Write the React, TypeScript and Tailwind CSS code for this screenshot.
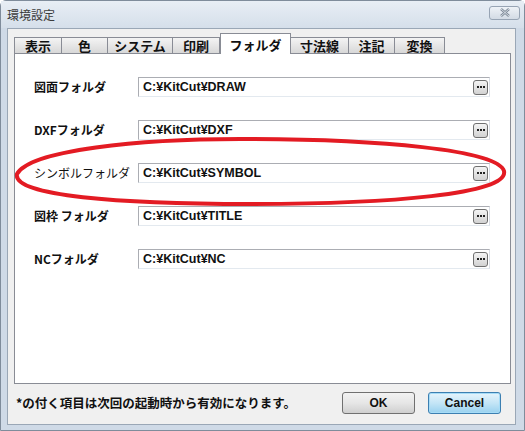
import React from 'react'

const jp = { fontFamily: '"Noto Sans CJK JP", "Liberation Sans", sans-serif' }
const latin = { fontFamily: '"Liberation Sans", "Noto Sans CJK JP", sans-serif' }

const tabs = [
  { label: '表示', w: 'w-[48px]' },
  { label: '色', w: 'w-[46px]' },
  { label: 'システム', w: 'w-[65px]' },
  { label: '印刷', w: 'w-[47px]' },
  { label: 'フォルダ', w: 'w-[71px]', active: true },
  { label: '寸法線', w: 'w-[58px]' },
  { label: '注記', w: 'w-[46px]' },
  { label: '変換', w: 'w-[50px]' },
]

const folders = [
  { label: '図面フォルダ', path: 'C:¥KitCut¥DRAW', bold: true },
  { label: 'DXFフォルダ', path: 'C:¥KitCut¥DXF', bold: true },
  { label: 'シンボルフォルダ', path: 'C:¥KitCut¥SYMBOL', bold: false },
  { label: '図枠 フォルダ', path: 'C:¥KitCut¥TITLE', bold: true },
  { label: 'NCフォルダ', path: 'C:¥KitCut¥NC', bold: true },
]

function BrowseButton() {
  return (
    <button className="mr-[1px] flex h-[15px] w-[15px] items-center justify-center rounded-[3px] border border-[#707070] bg-gradient-to-b from-[#f4f4f4] to-[#d2d2d2]">
      <span className="flex gap-[1px]">
        <span className="h-[2px] w-[2px] bg-[#222]" />
        <span className="h-[2px] w-[2px] bg-[#222]" />
        <span className="h-[2px] w-[2px] bg-[#222]" />
      </span>
    </button>
  )
}

function FolderRow({ label, path, bold }: { label: string; path: string; bold: boolean }) {
  return (
    <div className="flex items-center">
      <span
        style={jp}
        className={`w-[104px] text-[12px] text-[#111] ${bold ? 'font-bold' : 'font-normal'}`}
      >
        {label}
      </span>
      <div className="flex h-[20px] w-[352px] items-center justify-between border border-[#abadb3] border-r-[#dbdfe6] border-b-[#e3e9ef] bg-white">
        <span style={latin} className="pl-[4px] text-[12.5px] font-bold text-[#111]">
          {path}
        </span>
        <BrowseButton />
      </div>
    </div>
  )
}

export default function App() {
  return (
    <div className="relative h-[431px] w-[525px] overflow-hidden bg-white">
      <div className="flex h-[431px] w-[525px] flex-col rounded-t-[6px] border border-[#7f8c9b] bg-[#cfdae7]">
        {/* Title bar */}
        <div className="flex h-[27px] items-center justify-between bg-gradient-to-b from-[#e8eef5] to-[#d5dfea] pl-[6px] pr-[4px]">
          <span style={jp} className="text-[12px] text-[#3c3c3c]">
            環境設定
          </span>
          <div className="mt-[-4px] flex h-[14px] w-[31px] items-center justify-center rounded-[3px] border border-[#97a4b4] bg-gradient-to-b from-[#eef2f7] to-[#d3dbe5]">
            <svg width="12" height="9" viewBox="0 0 12 9">
              <path d="M2 1 L10 8 M10 1 L2 8" stroke="#7f8b99" strokeWidth="2.4" />
              <path d="M2 1 L10 8 M10 1 L2 8" stroke="#e8edf3" strokeWidth="0.8" />
            </svg>
          </div>
        </div>

        {/* Client area */}
        <div className="mb-[5px] ml-[6px] mr-[8px] flex flex-1 flex-col border border-[#9aa7b6] bg-[#f0f0f0] pl-[6px] pr-[4px] pt-[4px]">
          {/* Tabs */}
          <div className="flex h-[20px] items-end">
            {tabs.map((t) =>
              t.active ? (
                <div
                  key={t.label}
                  style={jp}
                  className={`${t.w} relative z-10 -mb-[1px] flex h-[21px] items-start justify-center border border-b-0 border-[#898c95] bg-white pt-[1px] text-[13px] font-bold text-[#111]`}
                >
                  {t.label}
                </div>
              ) : (
                <div
                  key={t.label}
                  style={jp}
                  className={`${t.w} flex h-[16px] items-center justify-center border border-b-0 border-l-0 border-[#898c95] bg-gradient-to-b from-[#f4f4f4] to-[#d8d8d8] text-[13px] font-bold leading-none text-[#111] first:border-l`}
                >
                  {t.label}
                </div>
              )
            )}
          </div>

          {/* Panel */}
          <div className="flex h-[331px] w-[497px] flex-col gap-[23px] border border-[#898c95] bg-white pl-[19px] pt-[23px]">
            {folders.map((f) => (
              <FolderRow key={f.label} {...f} />
            ))}
          </div>

          {/* Footer */}
          <div className="flex flex-1 items-center justify-between pb-[2px] pl-[2px] pr-[10px]">
            <span style={jp} className="text-[12.5px] font-bold text-[#111]">
              *の付く項目は次回の起動時から有効になります。
            </span>
            <div className="flex gap-[13px]">
              <button
                style={latin}
                className="h-[22px] w-[73px] rounded-[3px] border border-[#707070] bg-gradient-to-b from-[#f2f2f2] via-[#e6e6e6] to-[#cfcfcf] text-[12px] font-bold text-[#111]"
              >
                OK
              </button>
              <button
                style={latin}
                className="h-[22px] w-[73px] rounded-[3px] border border-[#3c7fb1] bg-gradient-to-b from-[#e5f4fc] via-[#c4e5f6] to-[#98d1ef] text-[12px] font-bold text-[#111] shadow-[inset_0_0_0_1px_#a6dcf7]"
              >
                Cancel
              </button>
            </div>
          </div>
        </div>
      </div>

      {/* Hand-drawn red ellipse annotation */}
      <svg
        className="pointer-events-none absolute left-0 top-0"
        width="525"
        height="431"
        viewBox="0 0 525 431"
      >
        <path
          d="M17 174 C 30 150 140 139 240 139 C 380 139 498 150 504 171 C 509 194 390 204 250 204 C 120 204 12 196 17 174 Z"
          fill="none"
          stroke="#e31b23"
          strokeWidth="4"
        />
      </svg>
    </div>
  )
}
